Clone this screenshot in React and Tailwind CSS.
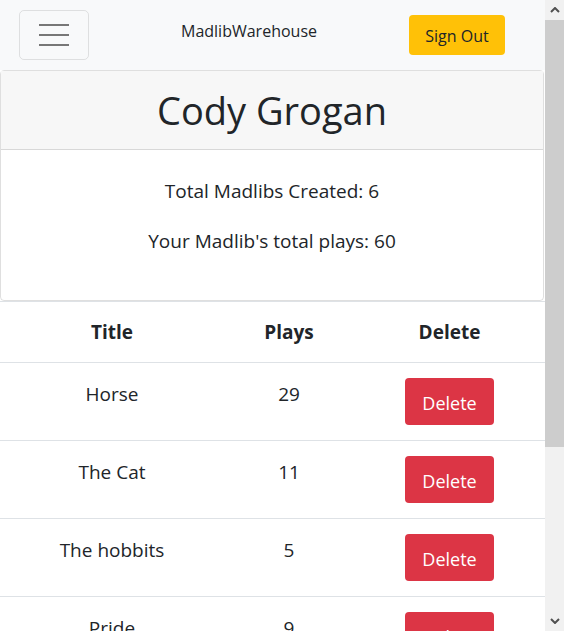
import React from "react";

const madlibs = [
  { title: "Horse", plays: 29 },
  { title: "The Cat", plays: 11 },
  { title: "The hobbits", plays: 5 },
  { title: "Pride", plays: 9 },
];

const Chevron = ({ up }) => (
  <svg width="10" height="6" viewBox="0 0 10 6">
    <polyline
      points={up ? "1,5 5,1 9,5" : "1,1 5,5 9,1"}
      fill="none"
      stroke="#505050"
      strokeWidth="2"
    />
  </svg>
);

const App = () => {
  return (
    <div className="flex h-[631px] w-[564px] overflow-hidden bg-white font-['Open_Sans',sans-serif] text-[#212529]">
      {/* page */}
      <div className="w-[545px] shrink-0">
        {/* navbar */}
        <div className="flex h-[70px] items-center bg-[#f8f9fa] pl-[19px] pr-[40px]">
          <button className="flex h-[50px] w-[70px] flex-col items-center justify-center gap-[8px] rounded-[5px] border border-black/10">
            <span className="h-[2px] w-[30px] bg-[#777]"></span>
            <span className="h-[2px] w-[30px] bg-[#777]"></span>
            <span className="h-[2px] w-[30px] bg-[#777]"></span>
          </button>
          <div className="-mt-[8px] flex-1 text-center text-[16px]">MadlibWarehouse</div>
          <button className="flex h-[40px] w-[96px] items-center justify-center rounded-[4px] bg-[#ffc107] pt-[2px] text-[16px]">
            Sign Out
          </button>
        </div>

        {/* profile card */}
        <div className="mr-px rounded-[4px] border border-black/[.125]">
          <div className="flex h-[79px] items-center justify-center border-b border-black/[.125] bg-[#f7f7f7] text-[38px]">
            Cody Grogan
          </div>
          <div className="h-[150px] pt-[16px] text-center text-[19px]">
            <p className="flex h-[50px] items-center justify-center">Total Madlibs Created: 6</p>
            <p className="flex h-[50px] items-center justify-center">Your Madlib's total plays: 60</p>
          </div>
        </div>

        {/* madlib table */}
        <div className="grid grid-cols-[224px_130px_1fr] text-center text-[19px]">
          <div className="flex h-[61px] items-center justify-center border-t border-[#dee2e6] font-bold">Title</div>
          <div className="flex h-[61px] items-center justify-center border-t border-[#dee2e6] font-bold">Plays</div>
          <div className="flex h-[61px] items-center justify-center border-t border-[#dee2e6] font-bold">Delete</div>
          {madlibs.map((m) => (
            <React.Fragment key={m.title}>
              <div className="h-[78px] border-t border-[#dee2e6] pt-[16px] leading-[30px]">{m.title}</div>
              <div className="h-[78px] border-t border-[#dee2e6] pt-[16px] leading-[30px]">{m.plays}</div>
              <div className="flex h-[78px] justify-center border-t border-[#dee2e6] pt-[15px]">
                <button className="h-[47px] w-[89px] rounded-[4px] bg-[#dc3545] pt-[3px] text-[18px] text-white">
                  Delete
                </button>
              </div>
            </React.Fragment>
          ))}
        </div>
      </div>

      {/* scrollbar */}
      <div className="flex w-[19px] flex-col bg-[#f1f1f1]">
        <div className="flex h-[20px] items-center justify-center">
          <Chevron up />
        </div>
        <div className="h-[427px] bg-[#cdcdcd]"></div>
        <div className="flex-1"></div>
        <div className="flex h-[20px] items-center justify-center">
          <Chevron />
        </div>
      </div>
    </div>
  );
};

export default App;
